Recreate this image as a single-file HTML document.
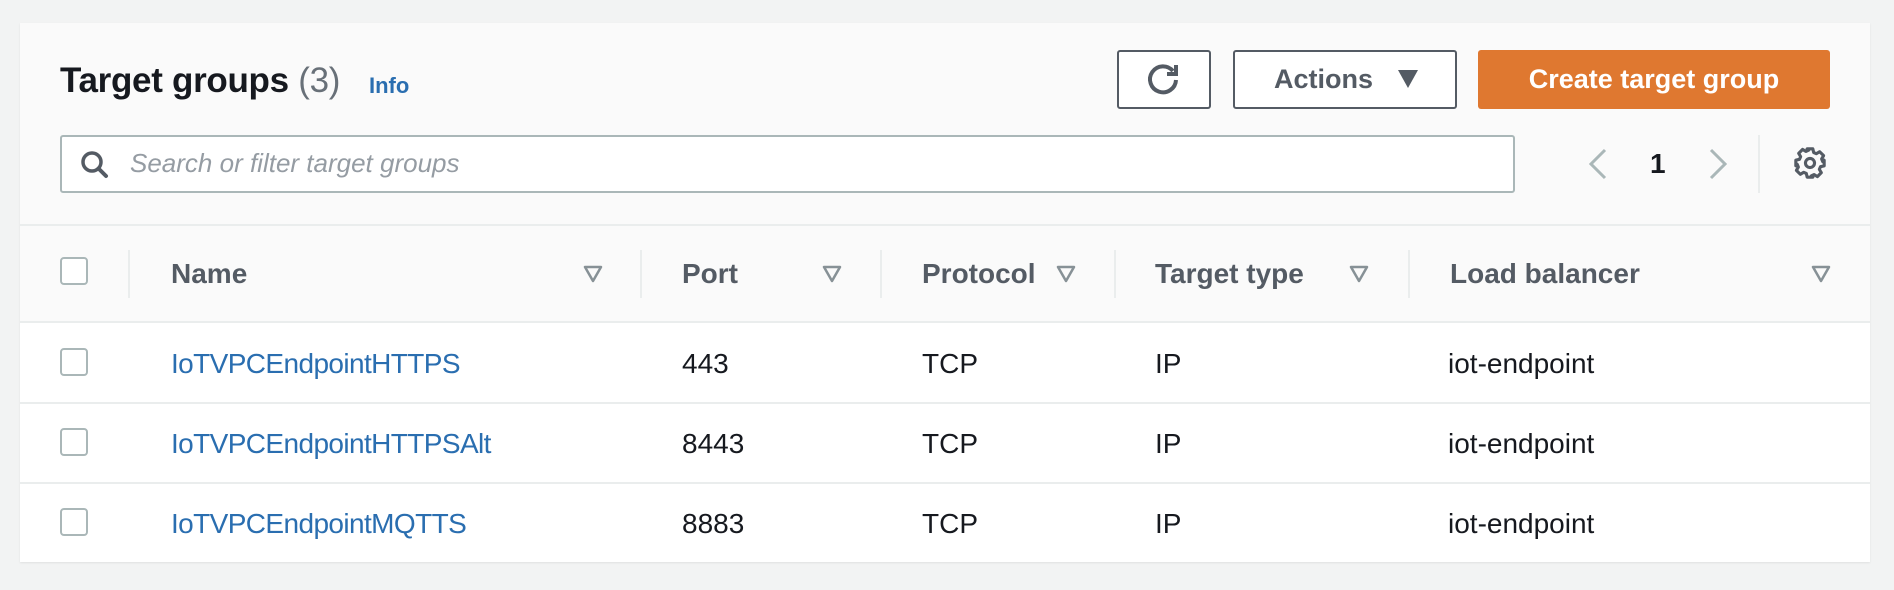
<!DOCTYPE html>
<html><head><meta charset="utf-8"><style>
*{box-sizing:border-box;margin:0;padding:0}
body{width:1894px;height:590px;background:#f2f3f3;font-family:"Liberation Sans",sans-serif;position:relative;overflow:hidden}
.abs{position:absolute}
.panel{left:20px;top:23px;width:1850px;height:539px;background:#fafafa;box-shadow:0 1px 2px rgba(0,0,0,.08)}
.title{left:60px;top:61px;font-size:35px;font-weight:bold;color:#16191f;white-space:nowrap;letter-spacing:-0.3px}
.title span{font-weight:normal;color:#687078}
.info{left:369px;top:73px;font-size:22px;font-weight:bold;color:#2a6eb0}
.btn{border:2px solid #545b64;border-radius:3px;background:#fff;top:50px;height:59px}
.search{left:60px;top:135px;width:1455px;height:58px;border:2px solid #aab7b8;border-radius:3px;background:#fff}
.ph{left:130px;top:148px;font-size:26px;font-style:italic;color:#959ca3}
.sep{left:20px;width:1850px;height:2px;background:#eaeded}
.row{left:20px;width:1850px;height:80px;background:#fff}
.cb{width:28px;height:28px;border:2px solid #aab7b8;border-radius:4px;background:#fff;left:60px}
.hd{font-size:28px;font-weight:bold;color:#545b64;top:258px;white-space:nowrap}
.vd{width:2px;height:48px;top:250px;background:#eaeded}
.fi{top:264px}
.tx{font-size:28px;color:#16191f;white-space:nowrap}
.ln{color:#2a6eb0;letter-spacing:-0.6px}
</style></head><body>
<div class="abs panel"></div>
<div class="abs title">Target groups <span>(3)</span></div>
<div class="abs info">Info</div>

<div class="abs btn" style="left:1117px;width:94px"></div>
<svg class="abs" style="left:1143px;top:60px" width="40" height="40" viewBox="0 0 40 40"><path d="M30 11 A13 13 0 1 0 33 20" fill="none" stroke="#545b64" stroke-width="4"/><path d="M33 5 V14 H24" fill="none" stroke="#545b64" stroke-width="4"/></svg>
<div class="abs btn" style="left:1233px;width:224px"></div>
<div class="abs" style="left:1274px;top:64px;font-size:27px;font-weight:bold;color:#545b64">Actions</div>
<svg class="abs" style="left:1398px;top:70px" width="20" height="18"><path d="M0 0H20L10 18Z" fill="#545b64"/></svg>
<div class="abs" style="left:1478px;top:50px;width:352px;height:59px;background:#df7830;border-radius:3px;color:#fff;font-size:27px;font-weight:bold;text-align:center;line-height:59px">Create target group</div>

<div class="abs search"></div>
<svg class="abs" style="left:80px;top:150px" width="30" height="30" viewBox="0 0 30 30"><circle cx="12" cy="12" r="9" fill="none" stroke="#545b64" stroke-width="3.5"/><path d="M18.5 18.5 L26 26" stroke="#545b64" stroke-width="4" stroke-linecap="round"/></svg>
<div class="abs ph">Search or filter target groups</div>

<svg class="abs" style="left:1587px;top:148px" width="22" height="32"><path d="M18 2 L4 16 L18 30" fill="none" stroke="#aab7b8" stroke-width="3"/></svg>
<div class="abs" style="left:1650px;top:148px;font-size:28px;font-weight:bold;color:#16191f">1</div>
<svg class="abs" style="left:1707px;top:148px" width="22" height="32"><path d="M4 2 L18 16 L4 30" fill="none" stroke="#aab7b8" stroke-width="3"/></svg>
<div class="abs" style="left:1758px;top:135px;width:2px;height:58px;background:#eaeded"></div>
<svg class="abs" style="left:1793px;top:146px" width="34" height="34" viewBox="0 0 24 24"><path d="M10 2h4l.6 2.6 1.9.8 2.3-1.4 2.8 2.8-1.4 2.3.8 1.9L22 10v4l-2.6.6-.8 1.9 1.4 2.3-2.8 2.8-2.3-1.4-1.9.8L14 22h-4l-.6-2.6-1.9-.8-2.3 1.4-2.8-2.8 1.4-2.3-.8-1.9L2 14v-4l2.6-.6.8-1.9-1.4-2.3 2.8-2.8 2.3 1.4 1.9-.8Z" fill="none" stroke="#545b64" stroke-width="2.2" stroke-linejoin="round"/><circle cx="12" cy="12" r="3.2" fill="none" stroke="#545b64" stroke-width="2.2"/></svg>

<div class="abs sep" style="top:224px"></div>
<div class="abs cb" style="top:257px"></div>
<div class="abs vd" style="left:128px"></div>
<div class="abs hd" style="left:171px">Name</div>
<div class="abs vd" style="left:640px"></div>
<div class="abs hd" style="left:682px">Port</div>
<div class="abs vd" style="left:880px"></div>
<div class="abs hd" style="left:922px">Protocol</div>
<div class="abs vd" style="left:1114px"></div>
<div class="abs hd" style="left:1155px">Target type</div>
<div class="abs vd" style="left:1408px"></div>
<div class="abs hd" style="left:1450px">Load balancer</div>
<svg class="abs fi" style="left:583px" width="20" height="20"><path d="M2 3H18L10 17Z" fill="none" stroke="#879196" stroke-width="2.5" stroke-linejoin="round"/></svg>
<svg class="abs fi" style="left:822px" width="20" height="20"><path d="M2 3H18L10 17Z" fill="none" stroke="#879196" stroke-width="2.5" stroke-linejoin="round"/></svg>
<svg class="abs fi" style="left:1056px" width="20" height="20"><path d="M2 3H18L10 17Z" fill="none" stroke="#879196" stroke-width="2.5" stroke-linejoin="round"/></svg>
<svg class="abs fi" style="left:1349px" width="20" height="20"><path d="M2 3H18L10 17Z" fill="none" stroke="#879196" stroke-width="2.5" stroke-linejoin="round"/></svg>
<svg class="abs fi" style="left:1811px" width="20" height="20"><path d="M2 3H18L10 17Z" fill="none" stroke="#879196" stroke-width="2.5" stroke-linejoin="round"/></svg>

<div class="abs sep" style="top:321px"></div>
<div class="abs row" style="top:323px"></div>
<div class="abs sep" style="top:402px"></div>
<div class="abs row" style="top:404px"></div>
<div class="abs sep" style="top:482px"></div>
<div class="abs row" style="top:484px;height:78px"></div>

<div class="abs cb" style="top:348px"></div>
<div class="abs tx ln" style="left:171px;top:348px">IoTVPCEndpointHTTPS</div>
<div class="abs tx" style="left:682px;top:348px">443</div>
<div class="abs tx" style="left:922px;top:348px">TCP</div>
<div class="abs tx" style="left:1155px;top:348px">IP</div>
<div class="abs tx" style="left:1448px;top:348px">iot-endpoint</div>

<div class="abs cb" style="top:428px"></div>
<div class="abs tx ln" style="left:171px;top:428px">IoTVPCEndpointHTTPSAlt</div>
<div class="abs tx" style="left:682px;top:428px">8443</div>
<div class="abs tx" style="left:922px;top:428px">TCP</div>
<div class="abs tx" style="left:1155px;top:428px">IP</div>
<div class="abs tx" style="left:1448px;top:428px">iot-endpoint</div>

<div class="abs cb" style="top:508px"></div>
<div class="abs tx ln" style="left:171px;top:508px">IoTVPCEndpointMQTTS</div>
<div class="abs tx" style="left:682px;top:508px">8883</div>
<div class="abs tx" style="left:922px;top:508px">TCP</div>
<div class="abs tx" style="left:1155px;top:508px">IP</div>
<div class="abs tx" style="left:1448px;top:508px">iot-endpoint</div>
</body></html>
